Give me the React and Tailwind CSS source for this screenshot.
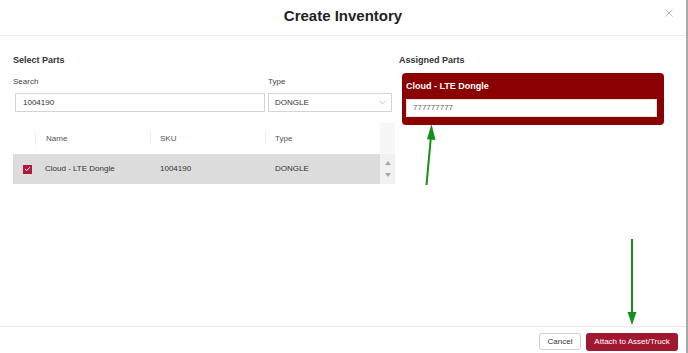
import React from 'react';

// Create Inventory modal - select parts and assign serials
const COLUMNS = [
  { key: 'name', label: 'Name', w: 'w-[115px]', pl: 'pl-[10px]' },
  { key: 'sku', label: 'SKU', w: 'w-[115px]', pl: 'pl-[9px]' },
  { key: 'type', label: 'Type', w: 'w-[115px]', pl: 'pl-[9px]' },
];

const ROWS = [{ name: 'Cloud - LTE Dongle', sku: '1004190', type: 'DONGLE', checked: true }];

const Arrows = () => (
  <svg className="absolute inset-0 pointer-events-none" width="688" height="353" viewBox="0 0 688 353">
    <line x1="426.5" y1="185" x2="430.8" y2="138" stroke="#12901a" strokeWidth="2" />
    <polygon points="431.5,124 435.5,140 427,139.3" fill="#12901a" />
    <line x1="632" y1="239" x2="632" y2="313" stroke="#12901a" strokeWidth="2" />
    <polygon points="627.5,312 636.5,312 632,325" fill="#12901a" />
  </svg>
);

export default function App() {
  return (
    <div className="w-[688px] h-[353px] bg-white relative overflow-hidden text-[#333] font-['Liberation_Sans',Arial,sans-serif]">
      <div className="w-[688px] h-full border-r-2 border-[#a9a9a9] flex flex-col">
        {/* Header */}
        <div className="h-[36px] shrink-0 border-b border-[#ececec] flex justify-center relative">
          <h1 className="pt-[7px] text-[15px] leading-[18px] font-bold text-[#222]">Create Inventory</h1>
          <svg className="absolute right-[13px] top-[9px]" width="8" height="8" viewBox="0 0 8 8">
            <path d="M0.5 0.5L7.5 7.5M7.5 0.5L0.5 7.5" stroke="#bdbdbd" strokeWidth="1" />
          </svg>
        </div>

        {/* Body */}
        <div className="flex-1 flex pl-[13px] pt-[18px]">
          <div className="w-[382px]">
            <div className="text-[9px] leading-[12px] font-bold text-[#333]">Select Parts</div>
            <div className="flex mt-[11px]">
              <div className="w-[255px]">
                <div className="text-[8px] leading-[10px] text-[#444]">Search</div>
                <div className="mt-[6px] ml-[2px] w-[250px] h-[19px] border border-[#d4d4d4] flex items-center pl-[7px] text-[8px] text-[#333]">
                  1004190
                </div>
              </div>
              <div className="w-[124px]">
                <div className="text-[8px] leading-[10px] text-[#444]">Type</div>
                <div className="mt-[6px] w-[124px] h-[19px] border border-[#d4d4d4] flex items-center justify-between pl-[6px] pr-[5px] text-[8px] text-[#333]">
                  <span>DONGLE</span>
                  <svg width="7" height="5" viewBox="0 0 7 5">
                    <path d="M0.5 0.8L3.5 3.8L6.5 0.8" fill="none" stroke="#b8b8b8" strokeWidth="0.8" />
                  </svg>
                </div>
              </div>
            </div>

            {/* Table */}
            <div className="mt-[11px] flex w-[382px]">
              <div className="w-[367px]">
                <div className="h-[31px] flex items-center text-[8px] text-[#555]">
                  <div className="w-[22px]" />
                  {COLUMNS.map((c) => (
                    <div key={c.key} className={`${c.w} h-[13px] flex items-center border-l border-[#ececec] ${c.pl}`}>
                      {c.label}
                    </div>
                  ))}
                </div>
                {ROWS.map((r) => (
                  <div key={r.sku} className="h-[30px] bg-[#dcdcdc] flex items-center text-[8px] text-[#333]">
                    <div className="w-[22px] flex justify-end pr-[3px]">
                      <div className="w-[9px] h-[9px] bg-[#b3173b] flex items-center justify-center">
                        {r.checked && (
                          <svg width="7" height="6" viewBox="0 0 7 6">
                            <path d="M1 3L2.8 4.6L6 1.2" fill="none" stroke="#fff" strokeWidth="1" />
                          </svg>
                        )}
                      </div>
                    </div>
                    {COLUMNS.map((c) => (
                      <div key={c.key} className={`${c.w} pl-[10px]`}>
                        {r[c.key]}
                      </div>
                    ))}
                  </div>
                ))}
              </div>
              <div className="w-[15px] flex flex-col">
                <div className="h-[31px] bg-[#f7f7f7]" />
                <div className="h-[30px] bg-[#f1f1f1] flex flex-col items-center justify-center gap-[8px]">
                  <svg width="6" height="4" viewBox="0 0 6 4"><polygon points="3,0 6,4 0,4" fill="#a8a8a8" /></svg>
                  <svg width="6" height="4" viewBox="0 0 6 4"><polygon points="0,0 6,0 3,4" fill="#a8a8a8" /></svg>
                </div>
              </div>
            </div>
          </div>

          {/* Assigned parts */}
          <div className="ml-[4px] w-[268px]">
            <div className="text-[9px] leading-[12px] font-bold text-[#333]">Assigned Parts</div>
            <div className="mt-[7px] ml-[3px] w-[262px] h-[52px] rounded-[4px] bg-[#8b0000] px-[4px] pt-[7px]">
              <div className="text-[9px] leading-[12px] font-bold text-white">Cloud - LTE Dongle</div>
              <div className="mt-[7px] w-[251px] h-[18px] bg-white border border-[#e2e2e2] flex items-center pl-[6px] text-[8px] text-[#666]">
                777777777
              </div>
            </div>
          </div>
        </div>

        {/* Footer */}
        <div className="h-[27px] shrink-0 border-t border-[#ececec] flex justify-end items-start pt-[6px] pr-[8px] gap-[5px]">
          <button className="w-[42px] h-[17px] border border-[#cfcfcf] rounded-[3px] bg-white text-[8px] text-[#333]">
            Cancel
          </button>
          <button className="w-[92px] h-[18px] rounded-[3px] bg-[#a0172f] text-[8px] text-white">
            Attach to Asset/Truck
          </button>
        </div>
      </div>
      <Arrows />
    </div>
  );
}
